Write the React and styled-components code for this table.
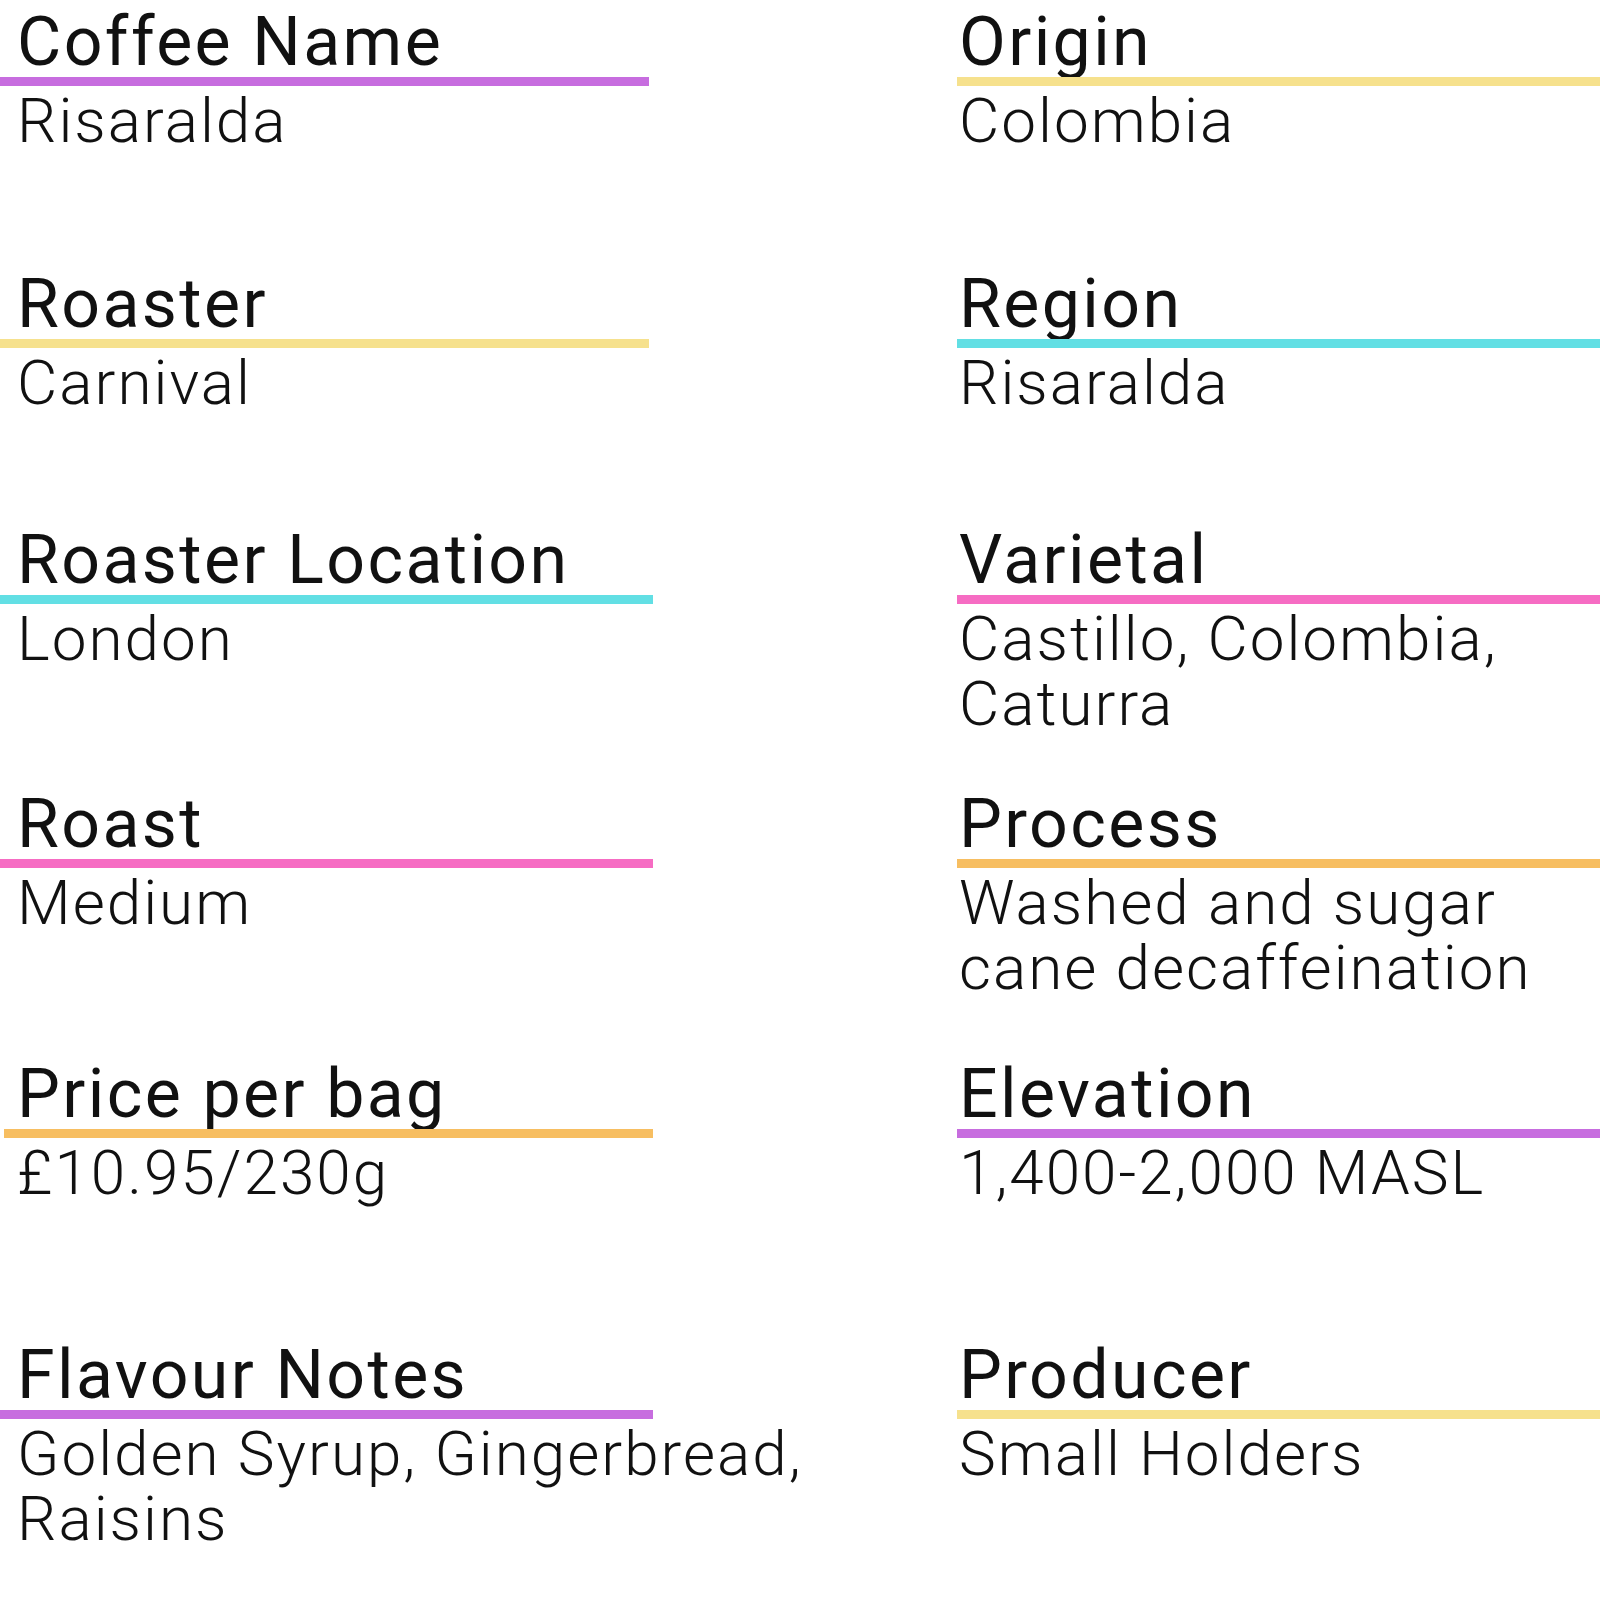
import React from "react";
import styled, { createGlobalStyle } from "styled-components";

const GlobalStyle = createGlobalStyle`
  html, body {
    margin: 0;
    padding: 0;
    background: #ffffff;
  }
  body {
    font-family: Roboto, "Liberation Sans", sans-serif;
    color: #111111;
  }
`;

// colores de las lineas
const colores = {
  morado: "#c76ddf",
  amarillo: "#f6e18d",
  cian: "#62dfe4",
  rosa: "#f66cc3",
  naranja: "#f7be61",
};

const filas = [
  {
    alto: 262,
    izq: { titulo: "Coffee Name", valor: ["Risaralda"], color: colores.morado, ancho: 649 },
    der: { titulo: "Origin", valor: ["Colombia"], color: colores.amarillo },
  },
  {
    alto: 256,
    izq: { titulo: "Roaster", valor: ["Carnival"], color: colores.amarillo, ancho: 649 },
    der: { titulo: "Region", valor: ["Risaralda"], color: colores.cian },
  },
  {
    alto: 264,
    izq: { titulo: "Roaster Location", valor: ["London"], color: colores.cian, ancho: 653 },
    der: {
      titulo: "Varietal",
      valor: ["Castillo, Colombia,", "Caturra"],
      color: colores.rosa,
    },
  },
  {
    alto: 270,
    izq: { titulo: "Roast", valor: ["Medium"], color: colores.rosa, ancho: 653 },
    der: {
      titulo: "Process",
      valor: ["Washed and sugar", "cane decaffeination"],
      color: colores.naranja,
    },
  },
  {
    alto: 281,
    izq: {
      titulo: "Price per bag",
      valor: ["£10.95/230g"],
      color: colores.naranja,
      ancho: 653,
      inicio: 4,
    },
    der: { titulo: "Elevation", valor: ["1,400-2,000 MASL"], color: colores.morado },
  },
  {
    alto: 260,
    izq: {
      titulo: "Flavour Notes",
      valor: ["Golden Syrup, Gingerbread,", "Raisins"],
      color: colores.morado,
      ancho: 653,
    },
    der: { titulo: "Producer", valor: ["Small Holders"], color: colores.amarillo },
  },
];

const Celda = ({ dato, lado }) => (
  <Campo $lado={lado}>
    <Titulo>{dato.titulo}</Titulo>
    <Linea $color={dato.color} $ancho={dato.ancho} $inicio={dato.inicio || 0} />
    <Valor>
      {dato.valor.map((l) => (
        <span key={l}>{l}</span>
      ))}
    </Valor>
  </Campo>
);

const App = () => {
  return (
    <>
      <GlobalStyle />
      <Contenedor>
        {filas.map((f) => (
          <Fila key={f.izq.titulo} $alto={f.alto}>
            <Celda dato={f.izq} lado="izq" />
            <Celda dato={f.der} lado="der" />
          </Fila>
        ))}
      </Contenedor>
    </>
  );
};

const Contenedor = styled.div`
  width: 1600px;
  padding-top: 8px;
  display: flex;
  flex-direction: column;
`;

const Fila = styled.div`
  display: grid;
  grid-template-columns: 957px 643px;
  height: ${(p) => p.$alto}px;
`;

const Campo = styled.div`
  display: flex;
  flex-direction: column;
  --texto: ${(p) => (p.$lado === "izq" ? "17px" : "2px")};
`;

const Titulo = styled.div`
  font-size: 68px;
  line-height: 68px;
  font-weight: 400;
  padding-left: var(--texto);
  white-space: nowrap;
  letter-spacing: 2.4px;
`;

const Linea = styled.div`
  height: 9px;
  margin-top: 1px;
  margin-left: ${(p) => p.$inicio}px;
  width: ${(p) => (p.$ancho ? `${p.$ancho - p.$inicio}px` : "100%")};
  background-color: ${(p) => p.$color};
`;

const Valor = styled.div`
  margin-top: 2px;
  font-size: 62px;
  line-height: 65px;
  font-weight: 300;
  letter-spacing: 2px;
  padding-left: var(--texto);
  display: flex;
  flex-direction: column;
  white-space: nowrap;

  & > span {
    display: block;
  }
`;

export default App;
